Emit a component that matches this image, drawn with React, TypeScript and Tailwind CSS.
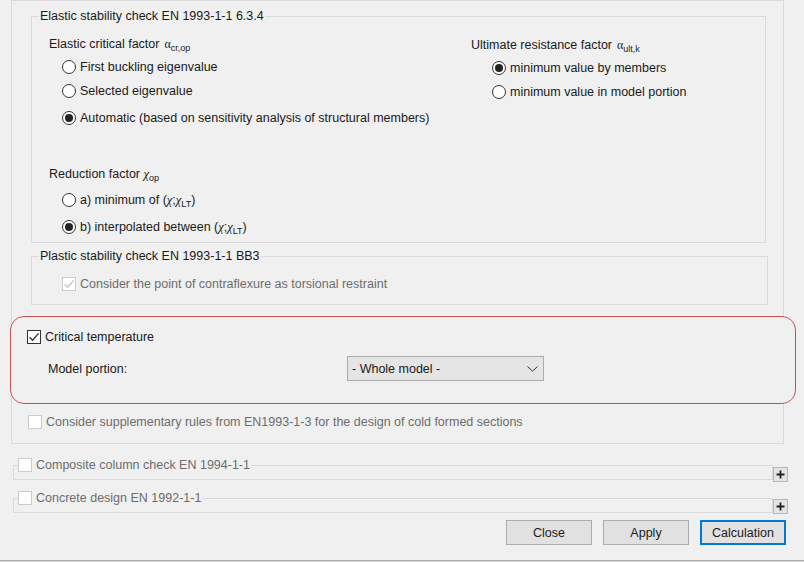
import React from "react";

const Radio = ({ checked }: { checked?: boolean }) => (
  <span className="w-[14px] h-[14px] rounded-full border border-[#333333] bg-white flex items-center justify-center shrink-0">
    {checked && <span className="w-[8px] h-[8px] rounded-full bg-[#222222]" />}
  </span>
);

const Check = ({ checked, disabled }: { checked?: boolean; disabled?: boolean }) => (
  <span
    className={
      disabled
        ? "w-[14px] h-[14px] border border-[#cccccc] bg-white flex items-center justify-center shrink-0"
        : "w-[14px] h-[14px] border border-[#333333] bg-white flex items-center justify-center shrink-0"
    }
  >
    {checked && (
      <svg width="12" height="12" viewBox="0 0 12 12">
        <path
          d="M1.6 6.2 L4.6 9.3 L10.6 2.4"
          fill="none"
          stroke={disabled ? "#c6c6c6" : "#333333"}
          strokeWidth="1.3"
        />
      </svg>
    )}
  </span>
);

const Alpha = ({ sub }: { sub: string }) => (
  <span className="ml-[5px] whitespace-nowrap">
    <span className="font-['Liberation_Serif',serif] text-[12px]">α</span>
    <span className="text-[9px] relative top-[3px]">{sub}</span>
  </span>
);

const Chi = ({ sub }: { sub?: string }) => (
  <span className="whitespace-nowrap">
    <span className="font-['Liberation_Serif',serif] italic text-[12.5px]">χ</span>
    {sub && <span className="text-[9px] relative top-[3px]">{sub}</span>}
  </span>
);

const RadioRow = ({ checked, children, className }: { checked?: boolean; children: React.ReactNode; className?: string }) => (
  <div className={"h-6 flex items-center gap-[4px] " + (className ?? "")}>
    <Radio checked={checked} />
    <span className="whitespace-nowrap">{children}</span>
  </div>
);

const Plus = ({ className }: { className?: string }) => (
  <div className={"w-[15px] h-[15px] border border-[#b8b8b8] bg-[#e4e4e4] flex items-center justify-center shrink-0 " + (className ?? "")}>
    <svg width="9" height="9" viewBox="0 0 9 9">
      <path d="M4.5 0.5 V8.5 M0.5 4.5 H8.5" stroke="#222222" strokeWidth="1.8" />
    </svg>
  </div>
);

const Button = ({ label, primary }: { label: string; primary?: boolean }) => (
  <div
    className={
      primary
        ? "w-[86px] h-[25px] border-2 border-[#0078d7] bg-[#e1e1e1] flex items-center justify-center"
        : "w-[86px] h-[25px] border border-[#adadad] bg-[#e1e1e1] flex items-center justify-center"
    }
  >
    {label}
  </div>
);

export default function App() {
  return (
    <div className="w-[804px] h-[562px] bg-[#f0f0f0] overflow-hidden flex flex-col font-['Liberation_Sans',Arial,sans-serif] text-[12.5px] leading-4 text-[#1a1a1a]">
      {/* Outer group */}
      <div className="ml-[11px] w-[773px] h-[444px] border border-[#dadada] flex flex-col shrink-0">
        {/* Elastic stability group */}
        <div className="relative mt-[15px] ml-[19px] w-[735px] h-[227px] border border-[#dadada] shrink-0 flex">
          <span className="absolute left-[7px] -top-[9px] px-[1px] bg-[#f0f0f0] whitespace-nowrap">
            Elastic stability check EN 1993-1-1 6.3.4
          </span>
          <div className="ml-[17px] w-[422px] flex flex-col">
            <div className="mt-[19px] h-4 whitespace-nowrap">
              Elastic critical factor<Alpha sub="cr,op" />
            </div>
            <RadioRow className="mt-[3px] pl-[13px]">First buckling eigenvalue</RadioRow>
            <RadioRow className="pl-[13px]">Selected eigenvalue</RadioRow>
            <RadioRow checked className="mt-[3px] pl-[13px]">
              Automatic (based on sensitivity analysis of structural members)
            </RadioRow>
            <div className="mt-[36px] h-4 whitespace-nowrap">
              Reduction factor <Chi sub="op" />
            </div>
            <RadioRow className="mt-[6px] pl-[13px]">
              a) minimum of (<Chi />;<Chi sub="LT" />)
            </RadioRow>
            <RadioRow checked className="mt-[3px] pl-[13px]">
              b) interpolated between (<Chi />;<Chi sub="LT" />)
            </RadioRow>
          </div>
          <div className="flex flex-col">
            <div className="mt-[20px] h-4 whitespace-nowrap">
              Ultimate resistance factor<Alpha sub="ult,k" />
            </div>
            <RadioRow checked className="mt-[3px] pl-[21px]">minimum value by members</RadioRow>
            <RadioRow className="pl-[21px]">minimum value in model portion</RadioRow>
          </div>
        </div>

        {/* Plastic stability group */}
        <div className="relative mt-[13px] ml-[19px] w-[737px] h-[49px] border border-[#dadada] shrink-0 flex flex-col">
          <span className="absolute left-[7px] -top-[9px] px-[1px] bg-[#f0f0f0] whitespace-nowrap">
            Plastic stability check EN 1993-1-1 BB3
          </span>
          <div className="mt-[19px] h-4 pl-[30px] flex items-center gap-[4px] text-[#6d6d6d]">
            <Check checked disabled />
            <span className="whitespace-nowrap">Consider the point of contraflexure as torsional restraint</span>
          </div>
        </div>

        {/* Highlighted critical temperature */}
        <div className="relative z-10 mt-[11px] -ml-[2px] w-[786px] h-[88px] rounded-[14px] border-[1.5px] border-[#c55451] bg-[#f0f0f0] shrink-0 flex flex-col">
          <div className="mt-[12px] h-4 pl-[16px] flex items-center gap-[4px]">
            <Check checked />
            <span className="whitespace-nowrap">Critical temperature</span>
          </div>
          <div className="mt-[11px] h-[25px] flex items-center">
            <span className="pl-[37px] w-[336px] whitespace-nowrap">Model portion:</span>
            <div className="w-[197px] h-[25px] border border-[#acacac] bg-[#e5e5e5] flex items-center justify-between pl-[4px] pr-[5px]">
              <span className="whitespace-nowrap">- Whole model -</span>
              <svg width="11" height="6" viewBox="0 0 11 6">
                <path d="M0.5 0.5 L5.5 5.2 L10.5 0.5" fill="none" stroke="#333333" strokeWidth="1" />
              </svg>
            </div>
          </div>
        </div>

        <div className="mt-[10px] h-4 pl-[16px] flex items-center gap-[4px] text-[#6d6d6d]">
          <Check disabled />
          <span className="whitespace-nowrap">
            Consider supplementary rules from EN1993-1-3 for the design of cold formed sections
          </span>
        </div>
      </div>

      {/* Composite column */}
      <div className="mt-[21px] flex items-start shrink-0">
        <div className="relative ml-[13px] w-[760px] h-[15px] border border-[#dadada]">
          <div className="absolute left-[4px] -top-[9px] h-4 flex items-center gap-[4px] bg-[#f0f0f0] pr-[2px] text-[#6d6d6d]">
            <Check disabled />
            <span className="whitespace-nowrap">Composite column check EN 1994-1-1</span>
          </div>
        </div>
        <Plus className="mt-[2px]" />
      </div>

      {/* Concrete design */}
      <div className="mt-[16px] flex items-start shrink-0">
        <div className="relative ml-[13px] w-[760px] h-[15px] border border-[#dadada]">
          <div className="absolute left-[4px] -top-[9px] h-4 flex items-center gap-[4px] bg-[#f0f0f0] pr-[2px] text-[#6d6d6d]">
            <Check disabled />
            <span className="whitespace-nowrap">Concrete design EN 1992-1-1</span>
          </div>
        </div>
        <Plus className="mt-[1px]" />
      </div>

      {/* Buttons */}
      <div className="mt-[6px] flex justify-end gap-[11px] pr-[18px] shrink-0">
        <Button label="Close" />
        <Button label="Apply" />
        <Button label="Calculation" primary />
      </div>

      <div className="mt-auto h-[2px] border-t border-[#a8a8a8] bg-[#d8d8d8] shrink-0" />
    </div>
  );
}
